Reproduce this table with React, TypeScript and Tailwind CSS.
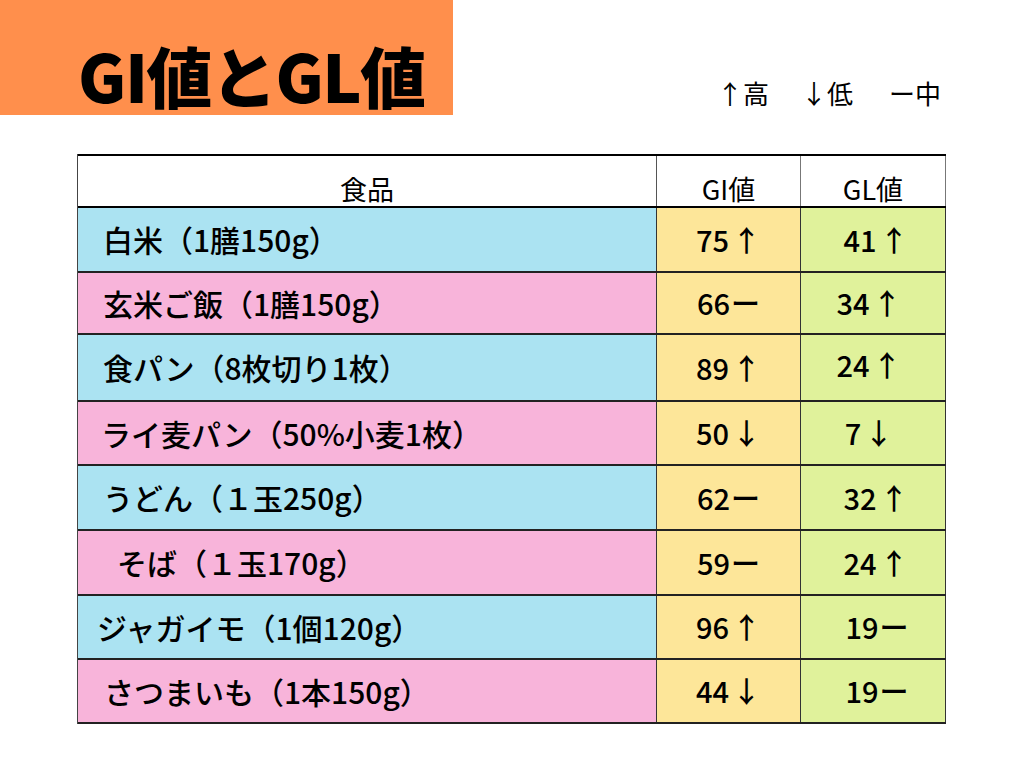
const font = { fontFamily: '"Noto Sans CJK JP", "Noto Sans", sans-serif' };

type Row = {
  food: string;
  pad: string;
  h: string;
  bg: string;
  gi: [string, string];
  gl: [string, string];
  glShift: string;
};

const rows: Row[] = [
  { food: '白米（1膳150g）', pad: 'pl-[25px]', h: 'h-[65px]', bg: 'bg-[#abe3f2]', gi: ['75', '↑'], gl: ['41', '↑'], glShift: 'pl-[6px]' },
  { food: '玄米ご飯（1膳150g）', pad: 'pl-[25px]', h: 'h-[62px]', bg: 'bg-[#f8b4da]', gi: ['66', 'ー'], gl: ['34', '↑'], glShift: 'pr-[8px]' },
  { food: '食パン（8枚切り1枚）', pad: 'pl-[25px]', h: 'h-[67px]', bg: 'bg-[#abe3f2]', gi: ['89', '↑'], gl: ['24', '↑'], glShift: 'pr-[8px] pb-[6px]' },
  { food: 'ライ麦パン（50%小麦1枚）', pad: 'pl-[23px]', h: 'h-[64px]', bg: 'bg-[#f8b4da]', gi: ['50', '↓'], gl: ['7', '↓'], glShift: 'pr-[8px]' },
  { food: 'うどん（１玉250g）', pad: 'pl-[25px]', h: 'h-[65px]', bg: 'bg-[#abe3f2]', gi: ['62', 'ー'], gl: ['32', '↑'], glShift: 'pl-[6px]' },
  { food: 'そば（１玉170g）', pad: 'pl-[39px]', h: 'h-[65px]', bg: 'bg-[#f8b4da]', gi: ['59', 'ー'], gl: ['24', '↑'], glShift: 'pl-[6px]' },
  { food: 'ジャガイモ（1個120g）', pad: 'pl-[19px]', h: 'h-[64px]', bg: 'bg-[#abe3f2]', gi: ['96', '↑'], gl: ['19', 'ー'], glShift: 'pl-[8px]' },
  { food: 'さつまいも（1本150g）', pad: 'pl-[26px]', h: 'h-[64px]', bg: 'bg-[#f8b4da]', gi: ['44', '↓'], gl: ['19', 'ー'], glShift: 'pl-[8px]' },
];

function Value({ v }: { v: [string, string] }) {
  // arrows sit a little apart from the digits, the dash sits close
  const gap = v[1] === 'ー' ? 'ml-[1px]' : 'ml-[3px]';
  return (
    <span className="flex items-center">
      <span>{v[0]}</span>
      <span className={gap}>{v[1]}</span>
    </span>
  );
}

export default function App() {
  return (
    <div className="w-[1024px] h-[768px] bg-white text-black overflow-hidden" style={font}>
      <div className="flex items-start">
        <div className="w-[453px] h-[115px] bg-[#ff8f4c] flex items-end pl-[78px] pb-[8px]">
          <h1 className="text-[66px] font-black leading-none tracking-[-1.5px]">GI値とGL値</h1>
        </div>
        <div className="flex ml-[264px] mt-[80px] text-[26px] leading-none">
          <span>↑高</span>
          <span className="ml-[32px]">↓低</span>
          <span className="ml-[36px]">ー中</span>
        </div>
      </div>

      <div className="ml-[77px] mt-[39px] w-[869px] border-l border-[#444]">
        <div className="grid grid-cols-[578px_144px_146px] h-[54px] border-t-2 border-b-2 border-black text-[27px] leading-none">
          <div className="flex items-end justify-center pb-[4px]">食品</div>
          <div className="flex items-end justify-center pb-[4px] border-l border-[#555]">GI値</div>
          <div className="flex items-end justify-center pb-[4px] border-l border-r border-[#777]">GL値</div>
        </div>
        {rows.map((r) => (
          <div key={r.food} className={`grid grid-cols-[578px_144px_146px] ${r.h} border-b-2 border-[#222] font-medium`}>
            <div className={`${r.bg} flex items-center ${r.pad} text-[30px]`}>{r.food}</div>
            <div className="bg-[#fde699] flex items-center justify-center border-l border-[#333] text-[29px]">
              <Value v={r.gi} />
            </div>
            <div className={`bg-[#e0f29b] flex items-center justify-center border-l border-r border-[#333] text-[29px] ${r.glShift}`}>
              <Value v={r.gl} />
            </div>
          </div>
        ))}
      </div>
    </div>
  );
}
